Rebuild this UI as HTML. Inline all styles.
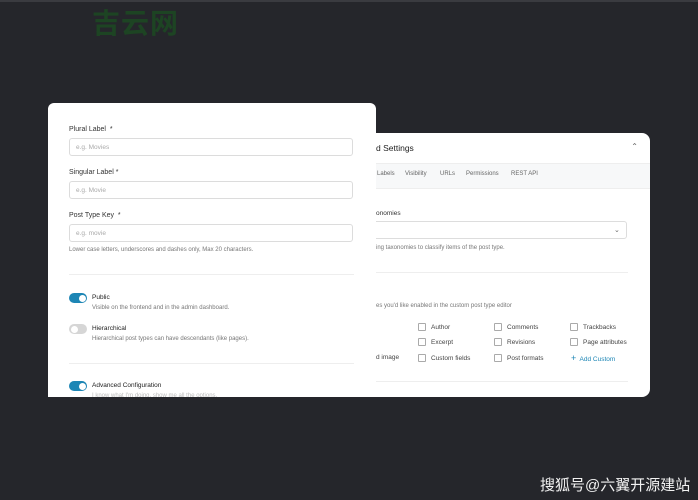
<!DOCTYPE html>
<html><head><meta charset="utf-8"><style>
html,body{margin:0;width:698px;height:500px;overflow:hidden}
body{background:#25262b;position:relative;font-family:"Liberation Sans",sans-serif;}
.top{position:absolute;left:0;top:0;width:698px;height:2px;background:#3a3b40}
.wm{position:absolute;left:92px;top:2px;font:bold 28px "Noto Sans CJK SC",sans-serif;color:#1d4423;letter-spacing:1px}
.foot{position:absolute;left:540px;top:474px;font:15px "Liberation Sans","Noto Sans CJK SC",sans-serif;color:#f2f2f2;white-space:nowrap}
.card{position:absolute;background:#fff;border-radius:8px;overflow:hidden}
.lbl{position:absolute;font-size:7px;color:#333}
.in{position:absolute;left:21px;width:284px;height:18px;border:1px solid #dcdcdc;border-radius:3px;font-size:6.5px;color:#aaa;line-height:18px;padding-left:6px;box-sizing:border-box}
.hint{position:absolute;font-size:6px;color:#777;white-space:nowrap}
.tg{position:absolute;left:21px;width:18px;height:10px;border-radius:5px;background:#1d86b5}
.tg:after{content:"";position:absolute;right:1.5px;top:1.5px;width:7px;height:7px;border-radius:50%;background:#fff}
.tg.off{background:#d6d6d6}.tg.off:after{right:auto;left:1.5px}
.hr{position:absolute;left:21px;width:285px;height:1px;background:#eee}
.cb{position:absolute;font-size:6.5px;color:#444;white-space:nowrap}
.cb:before{content:"";display:inline-block;width:6px;height:6px;border:1px solid #aaa;border-radius:1px;margin-right:5px;vertical-align:-2px}
.tab{position:absolute;top:38px;font-size:6px;color:#666}
</style></head><body>
<div class="top"></div>
<div class="wm">吉云网</div>
<div class="card" style="left:330px;top:133px;width:320px;height:264px;">
 <div style="position:absolute;left:46px;top:10px;font-size:8.5px;color:#222">d Settings</div>
 <div style="position:absolute;right:12px;top:9px;font-size:8px;color:#666">⌃</div>
 <div style="position:absolute;left:0;top:30px;width:320px;height:24px;background:#f7f8f9;border-top:1px solid #eee;border-bottom:1px solid #eee"></div>
 <div class="tab" style="left:47px">Labels</div>
 <div class="tab" style="left:75px">Visibility</div>
 <div class="tab" style="left:110px">URLs</div>
 <div class="tab" style="left:136px">Permissions</div>
 <div class="tab" style="left:181px">REST API</div>
 <div class="lbl" style="left:46px;top:77px;font-size:6.5px">onomies</div>
 <div style="position:absolute;left:20px;top:88px;width:277px;height:18px;border:1px solid #ddd;border-radius:3px;box-sizing:border-box"></div>
 <div style="position:absolute;left:284px;top:93px;font-size:7px;color:#666">⌄</div>
 <div class="hint" style="left:46px;top:112px">ing taxonomies to classify items of the post type.</div>
 <div class="hr" style="left:20px;top:139px;width:278px"></div>
 <div class="hint" style="left:46px;top:170px">es you'd like enabled in the custom post type editor</div>
 <div class="cb" style="left:88px;top:190px">Author</div>
 <div class="cb" style="left:164px;top:190px">Comments</div>
 <div class="cb" style="left:240px;top:190px">Trackbacks</div>
 <div class="cb" style="left:88px;top:205px">Excerpt</div>
 <div class="cb" style="left:164px;top:205px">Revisions</div>
 <div class="cb" style="left:240px;top:205px">Page attributes</div>
 <div style="position:absolute;left:46px;top:221px;font-size:6.5px;color:#444">d image</div>
 <div class="cb" style="left:88px;top:221px">Custom fields</div>
 <div class="cb" style="left:164px;top:221px">Post formats</div>
 <div style="position:absolute;left:241px;top:220px;font-size:6.5px;color:#1d86b5"><span style="font-size:9px">+</span>&nbsp; Add Custom</div>
 <div class="hr" style="left:20px;top:248px;width:278px"></div>
</div>
<div class="card" style="left:48px;top:103px;width:328px;height:294px;border-radius:6px 6px 0 0;">
 <div class="lbl" style="left:21px;top:23px">Plural Label &nbsp;*</div>
 <div class="in" style="top:35px">e.g. Movies</div>
 <div class="lbl" style="left:21px;top:66px">Singular Label *</div>
 <div class="in" style="top:78px">e.g. Movie</div>
 <div class="lbl" style="left:21px;top:109px">Post Type Key &nbsp;*</div>
 <div class="in" style="top:121px">e.g. movie</div>
 <div class="hint" style="left:21px;top:144px">Lower case letters, underscores and dashes only, Max 20 characters.</div>
 <div class="hr" style="top:171px"></div>
 <div class="tg" style="top:190px"></div>
 <div class="lbl" style="left:44px;top:191px;font-size:6.5px;color:#222">Public</div>
 <div class="hint" style="left:44px;top:202px">Visible on the frontend and in the admin dashboard.</div>
 <div class="tg off" style="top:221px"></div>
 <div class="lbl" style="left:44px;top:222px;font-size:6.5px;color:#222">Hierarchical</div>
 <div class="hint" style="left:44px;top:233px">Hierarchical post types can have descendants (like pages).</div>
 <div class="hr" style="top:260px"></div>
 <div class="tg" style="top:278px"></div>
 <div class="lbl" style="left:44px;top:279px;font-size:6.5px;color:#222">Advanced Configuration</div>
 <div class="hint" style="left:44px;top:290px;color:#bbb">I know what I'm doing, show me all the options.</div>
</div>
<div class="foot">搜狐号@六翼开源建站</div>
</body></html>
